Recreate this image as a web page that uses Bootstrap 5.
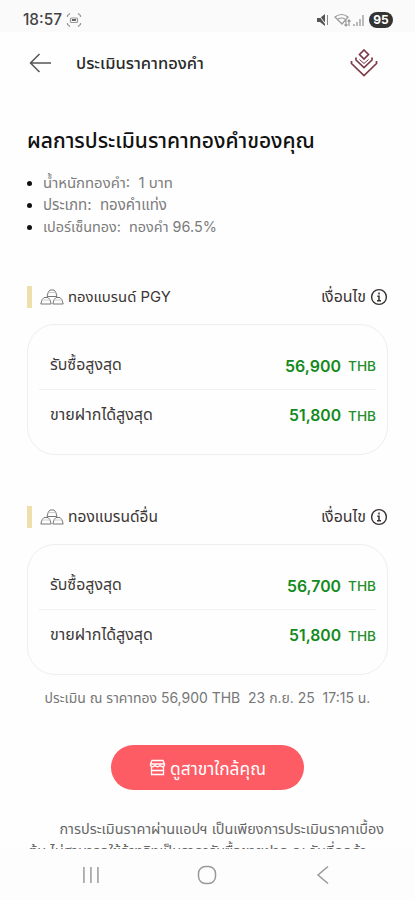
<!DOCTYPE html>
<html lang="th">
<head>
<meta charset="utf-8">
<meta name="viewport" content="width=device-width, initial-scale=1">
<title>ประเมินราคาทองคำ</title>
<link href="https://cdn.jsdelivr.net/npm/bootstrap@5.3.0/dist/css/bootstrap.min.css" rel="stylesheet">
<style>
body{font-family:Inter,"Noto Sans Thai","Noto Sans Thai Looped",sans-serif;font-size:14px;color:#333;background:#fefefe}
.screen{height:900px}
.status{height:32px;background:#fafafa;padding:7px 22px 0 23px;flex:none}
.clock{font:500 14.5px/26px Inter,sans-serif;color:#444}
.batt{width:24px;height:16px;border-radius:8px;background:#333;color:#fff;font:700 12px/16px Inter,sans-serif}
.topbar{height:62px;padding:0 37px 0 29px;flex:none}
.topbar h1{font-size:15px;color:#2b2b2b;margin-left:24px;padding-top:2px}
.page{padding:0 27px}
.headline{font-size:19px;line-height:30px;font-weight:500;color:#111;margin-top:32px}
.facts{margin-top:15px;line-height:22px;color:#7c7c7c;padding-left:16px}
.facts li::marker{color:#111}
.brand{height:24px;margin-top:47px;color:#3b3535}
.brand.next{margin-top:50px}
.bar{width:5px;height:22px;background:#eee0ab}
.price-card{height:131px;margin-top:15px;border:1px solid #eee;border-radius:28px;padding:15px 11px 0}
.price-row{height:49px;padding-left:11px;color:#403a3a}
.price-row+.price-row{border-top:1px solid #f1f1f1}
.amount{color:#138a1b;font-weight:600;font-size:16px;padding-top:4px}
.unit{color:#248f2b;font-weight:500;font-size:13px;margin-left:7px;padding-top:4px}
.asof{margin-top:12px;height:22px;line-height:22px;color:#777}
.cta{width:193px;height:45px;margin-top:36px;background:#fd5c65;color:#fff;font-size:15px;border:0}
.cta .fit{padding-top:3px}
.note{margin-top:28px;line-height:22px;color:#666;height:31px}
.note div+div{margin-left:1px}
.sysnav{height:51px;flex:none;background:#fdfdfd}
.fit{white-space:nowrap;display:inline-block}
</style>
<script src="https://cdn.jsdelivr.net/npm/bootstrap@5.3.0/dist/js/bootstrap.bundle.min.js"></script>
</head>
<body>
<svg width="0" height="0" class="d-block">
<defs>
<symbol id="gold" viewBox="0 0 24 16"><g fill="none" stroke="#777" stroke-width="1" stroke-linejoin="round"><path d="M7 7.500l1.300-4.500L10 1h4l1.700 2L17 7.500zM.8 15l1.400-4.500L4 8.500h4l1.800 2L11.200 15zM12.800 15l1.400-4.500L16 8.500h4l1.800 2L23.200 15z"/><path d="M8.500 3.500h7M2.500 11h7M14.500 11h7" stroke="#ccc"/></g></symbol>
<symbol id="info" viewBox="0 0 18 18"><circle cx="9" cy="9" r="7.400" fill="none" stroke="#383030" stroke-width="1.400"/><path d="M9 4.500v2M7.300 8.300H9v4.200M7 12.700h4" fill="none" stroke="#383030" stroke-width="1.500"/></symbol>
</defs>
</svg>
<div class="screen d-flex flex-column overflow-hidden">
<div class="status d-flex align-items-center">
<span class="clock fit" data-w="39">18:57</span>
<svg class="ms-1" width="16" height="16" viewBox="0 0 16 16" fill="none" stroke="#999" stroke-width="1.200"><path d="M1.500 5V3.500L4 1.500M12 1.500l2.500 2V5M1.500 11v1.500l2.500 2M12 14.500l2.500-2V11"/><rect x="4.500" y="6" width="7" height="4.500" rx="1"/><path d="M6 8h4" stroke="#666" stroke-width="2"/></svg>
<div class="d-flex align-items-center ms-auto">
<svg width="14" height="14" viewBox="0 0 14 14" fill="#555"><path d="M1 5h3l5-4v12L4 9H1z"/><path d="M2 1l9 12" stroke="#fafafa" fill="none"/><path d="M11.500 2v10" stroke="#888" fill="none"/></svg>
<svg class="ms-1" width="18" height="14" viewBox="0 0 18 14" fill="none" stroke="#999" stroke-width="1.200"><path d="M1 4q6.500-5 13 0L8 11zM4 6q3.500-2 7 0M12 7v6M10.500 11.500L12 13l1.500-1.500M15 13V7M13.700 8.500L15 7l1.500 1.500"/></svg>
<svg width="13" height="14" viewBox="0 0 13 14" fill="none" stroke="#aaa" stroke-width="1.600"><path d="M2 13v-2M5 13V9M8 13V6M11 13V2"/></svg>
<span class="batt text-center ms-1">95</span>
</div>
</div>
<header class="topbar d-flex align-items-center">
<svg width="23" height="20" viewBox="0 0 23 20" fill="none" stroke="#555" stroke-width="1.500"><path d="M22 10H1.500M10.500 1L1.500 10l9 9"/></svg>
<h1 class="mb-0"><span class="fit" data-w="128">ประเมินราคาทองคำ</span></h1>
<svg class="ms-auto" width="28" height="28" viewBox="0 0 28 28" fill="none" stroke="#7c3a48" stroke-width="1.700"><path d="M14 1L18.500 5.500 14 10 9.500 5.500z"/><path d="M6 8.500v2.500l8 7.500 8-7.500V8.500"/><path d="M9.500 10.500L14 14.500l4.500-4" stroke-width="1"/><path d="M1.500 12v2.500L14 26.500l12.500-12V12"/></svg>
</header>
<main class="page flex-grow-1 overflow-hidden">
<h2 class="headline mb-0"><span class="fit" data-w="288">ผลการประเมินราคาทองคำของคุณ</span></h2>
<ul class="facts mb-0">
<li><span class="fit" data-w="130">น้ำหนักทองคำ:&nbsp; 1 บาท</span></li>
<li><span class="fit" data-w="124">ประเภท:&nbsp; ทองคำแท่ง</span></li>
<li><span class="fit" data-w="174">เปอร์เซ็นทอง:&nbsp; ทองคำ 96.5%</span></li>
</ul>
<div class="brand d-flex align-items-center"><span class="bar me-2"></span><svg class="me-1" width="24" height="16"><use href="#gold"/></svg><span class="fit" data-w="103">ทองแบรนด์ PGY</span><span class="fit ms-auto me-1" data-w="45">เงื่อนไข</span><svg width="18" height="18"><use href="#info"/></svg></div>
<section class="price-card">
<div class="price-row d-flex align-items-center"><span class="fit me-auto" data-w="72">รับซื้อสูงสุด</span><span class="amount fit" data-w="56">56,900</span><span class="unit fit" data-w="28">THB</span></div>
<div class="price-row d-flex align-items-center"><span class="fit me-auto" data-w="103">ขายฝากได้สูงสุด</span><span class="amount fit" data-w="52">51,800</span><span class="unit fit" data-w="28">THB</span></div>
</section>
<div class="brand next d-flex align-items-center"><span class="bar me-2"></span><svg class="me-1" width="24" height="16"><use href="#gold"/></svg><span class="fit" data-w="90">ทองแบรนด์อื่น</span><span class="fit ms-auto me-1" data-w="45">เงื่อนไข</span><svg width="18" height="18"><use href="#info"/></svg></div>
<section class="price-card">
<div class="price-row d-flex align-items-center"><span class="fit me-auto" data-w="72">รับซื้อสูงสุด</span><span class="amount fit" data-w="54">56,700</span><span class="unit fit" data-w="28">THB</span></div>
<div class="price-row d-flex align-items-center"><span class="fit me-auto" data-w="103">ขายฝากได้สูงสุด</span><span class="amount fit" data-w="52">51,800</span><span class="unit fit" data-w="28">THB</span></div>
</section>
<div class="asof text-center"><span class="fit" data-w="326">ประเมิน ณ ราคาทอง 56,900 THB&nbsp; 23 ก.ย. 25&nbsp; 17:15 น.</span></div>
<button class="cta btn rounded-pill d-flex align-items-center justify-content-center mx-auto p-0"><svg class="me-1" width="17" height="17" viewBox="0 0 17 17" fill="none" stroke="#fff" stroke-width="1.300"><path d="M3 1.500h11l1.500 3.500v1.500q-2 2.500-4.500 0-2.500 2.500-5 0-2.500 2.500-4.500 0V5zM1.500 5h14M2.500 8v7.500h12V8M2.500 11.500h12"/></svg><span class="fit" data-w="96">ดูสาขาใกล้คุณ</span></button>
<div class="note"><div class="text-end"><span class="fit me-1" data-w="325">การประเมินราคาผ่านแอปฯ เป็นเพียงการประเมินราคาเบื้อง</span></div><div><span class="fit" data-w="339">ต้น ไม่สามารถใช้อ้างอิงเป็นราคารับซื้อขายฝาก ณ วันที่ลูกค้า</span></div></div>
</main>
<nav class="sysnav d-flex align-items-center justify-content-center">
<svg width="250" height="22" viewBox="0 0 250 22" fill="none" stroke="#999" stroke-width="1.500"><path d="M.9 3v16M7.900 3v16M14.900 3v16" stroke="#aaa" stroke-width="1.800"/><rect x="115.500" y="2.500" width="17" height="17" rx="7"/><path d="M245 2.500l-10 8.500 10 8.500"/></svg>
</nav>
</div>
<script>
// Scale each label's font so that it fills its intended line width.
document.querySelectorAll('.fit').forEach(function(el){
  var s=parseFloat(getComputedStyle(el).fontSize), w=el.getBoundingClientRect().width;
  el.style.fontSize=(s*el.dataset.w/w)+'px';
});
</script>
</body>
</html>
